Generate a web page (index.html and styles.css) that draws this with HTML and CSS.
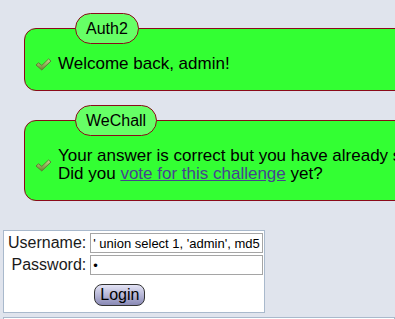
FILE: index.html
```html
<!DOCTYPE html>
<html lang="en">
<head>
    <meta charset="UTF-8">
    <title>Auth2</title>
    <link rel="stylesheet" href="styles.css">
</head>
<body>
    <div class="page">
        <!-- ログインメッセージ -->
        <div class="msg">
            <div class="msg-title">Auth2</div>
            <div class="msg-box">
                <span class="check">
                    <svg width="17" height="13" viewBox="0 0 17 13">
                        <defs>
                            <linearGradient id="ck1" x1="0" y1="0" x2="0" y2="1">
                                <stop offset="0" stop-color="#c8d890"/>
                                <stop offset="1" stop-color="#66862c"/>
                            </linearGradient>
                        </defs>
                        <path d="M1 7 L3.5 4.8 L6.8 7.4 L13.5 1 L16 3 L6.8 12 Z" fill="url(#ck1)" stroke="#5f7533" stroke-width="0.9" stroke-linejoin="round"/>
                    </svg>
                </span>
                <div class="msg-text">Welcome back, admin!</div>
            </div>
        </div>

        <div class="msg">
            <div class="msg-title">WeChall</div>
            <div class="msg-box">
                <span class="check">
                    <svg width="17" height="13" viewBox="0 0 17 13">
                        <defs>
                            <linearGradient id="ck2" x1="0" y1="0" x2="0" y2="1">
                                <stop offset="0" stop-color="#c8d890"/>
                                <stop offset="1" stop-color="#66862c"/>
                            </linearGradient>
                        </defs>
                        <path d="M1 7 L3.5 4.8 L6.8 7.4 L13.5 1 L16 3 L6.8 12 Z" fill="url(#ck2)" stroke="#5f7533" stroke-width="0.9" stroke-linejoin="round"/>
                    </svg>
                </span>
                <div class="msg-text">
                    Your answer is correct but you have already solved this challenge.<br>
                    Did you <a href="#">vote for this challenge</a> yet?
                </div>
            </div>
        </div>

        <!-- ログインフォーム -->
        <form class="login-box" onsubmit="return false;">
            <table>
                <tr>
                    <td class="label">Username:</td>
                    <td><input type="text" class="field" value="' union select 1, 'admin', md5('password') #"></td>
                </tr>
                <tr>
                    <td class="label">Password:</td>
                    <td><input type="password" class="field" value="x"></td>
                </tr>
                <tr>
                    <td></td>
                    <td><button class="login-btn">Login</button></td>
                </tr>
            </table>
        </form>

        <div class="next-box"></div>
    </div>
</body>
</html>
```

FILE: styles.css
```css
body {
    margin: 0;
    background-color: #e0e4ed;
    font-family: 'Liberation Sans', Arial, sans-serif;
    font-size: 16px;
    color: #000;
    overflow: hidden;
}

.page {
    padding-top: 13px;
}

/* メッセージ */
.msg {
    margin-bottom: 14px;
}

.msg-title {
    width: fit-content;
    position: relative;
    z-index: 1;
    margin-left: 75px;
    margin-bottom: -16px;
    padding: 6px 10px;
    line-height: 17px;
    background-color: #66ff66;
    border: 1px solid #8b0a1a;
    border-radius: 16px;
}

.msg-box {
    margin-left: 24px;
    width: 700px;
    display: flex;
    align-items: center;
    gap: 6px;
    padding: 26px 10px 17px;
    background-color: #33ff33;
    border: 1px solid #8b0a1a;
    border-radius: 12px;
    font-size: 17px;
    line-height: 18px;
}

.check {
    display: flex;
    flex-shrink: 0;
    padding-top: 1px;
}

.msg-text {
    white-space: nowrap;
}

.msg-text a {
    color: #45458f;
    text-decoration: underline;
}

/* フォーム */
.login-box {
    margin: 29px 0 0 3px;
    width: 260px;
    background-color: #fff;
    border: 1px solid #a9b9cc;
}

.login-box table {
    border-spacing: 2px 2px;
}

.login-box td {
    padding: 0;
}

.login-box td.label {
    padding: 0 2px;
    text-align: right;
    color: #1a1a1a;
}

.field {
    box-sizing: border-box;
    width: 173px;
    height: 20px;
    margin: 0;
    padding: 1px 2px;
    border: 1px solid #a5a5a5;
    font-family: 'Liberation Sans', Arial, sans-serif;
    font-size: 13px;
    color: #000;
    background-color: #fff;
}

.login-btn {
    margin: 7px 0 4px 4px;
    padding: 1px 5px;
    height: 22px;
    font-family: 'Liberation Sans', Arial, sans-serif;
    font-size: 16px;
    line-height: 18px;
    color: #000;
    border: 1px solid #333;
    border-radius: 8px;
    background: linear-gradient(#e4e4f6, #8a8ab6);
}

.next-box {
    margin: 4px 0 0 3px;
    height: 20px;
    background-color: #fff;
    border: 1px solid #a9b9cc;
}
```
